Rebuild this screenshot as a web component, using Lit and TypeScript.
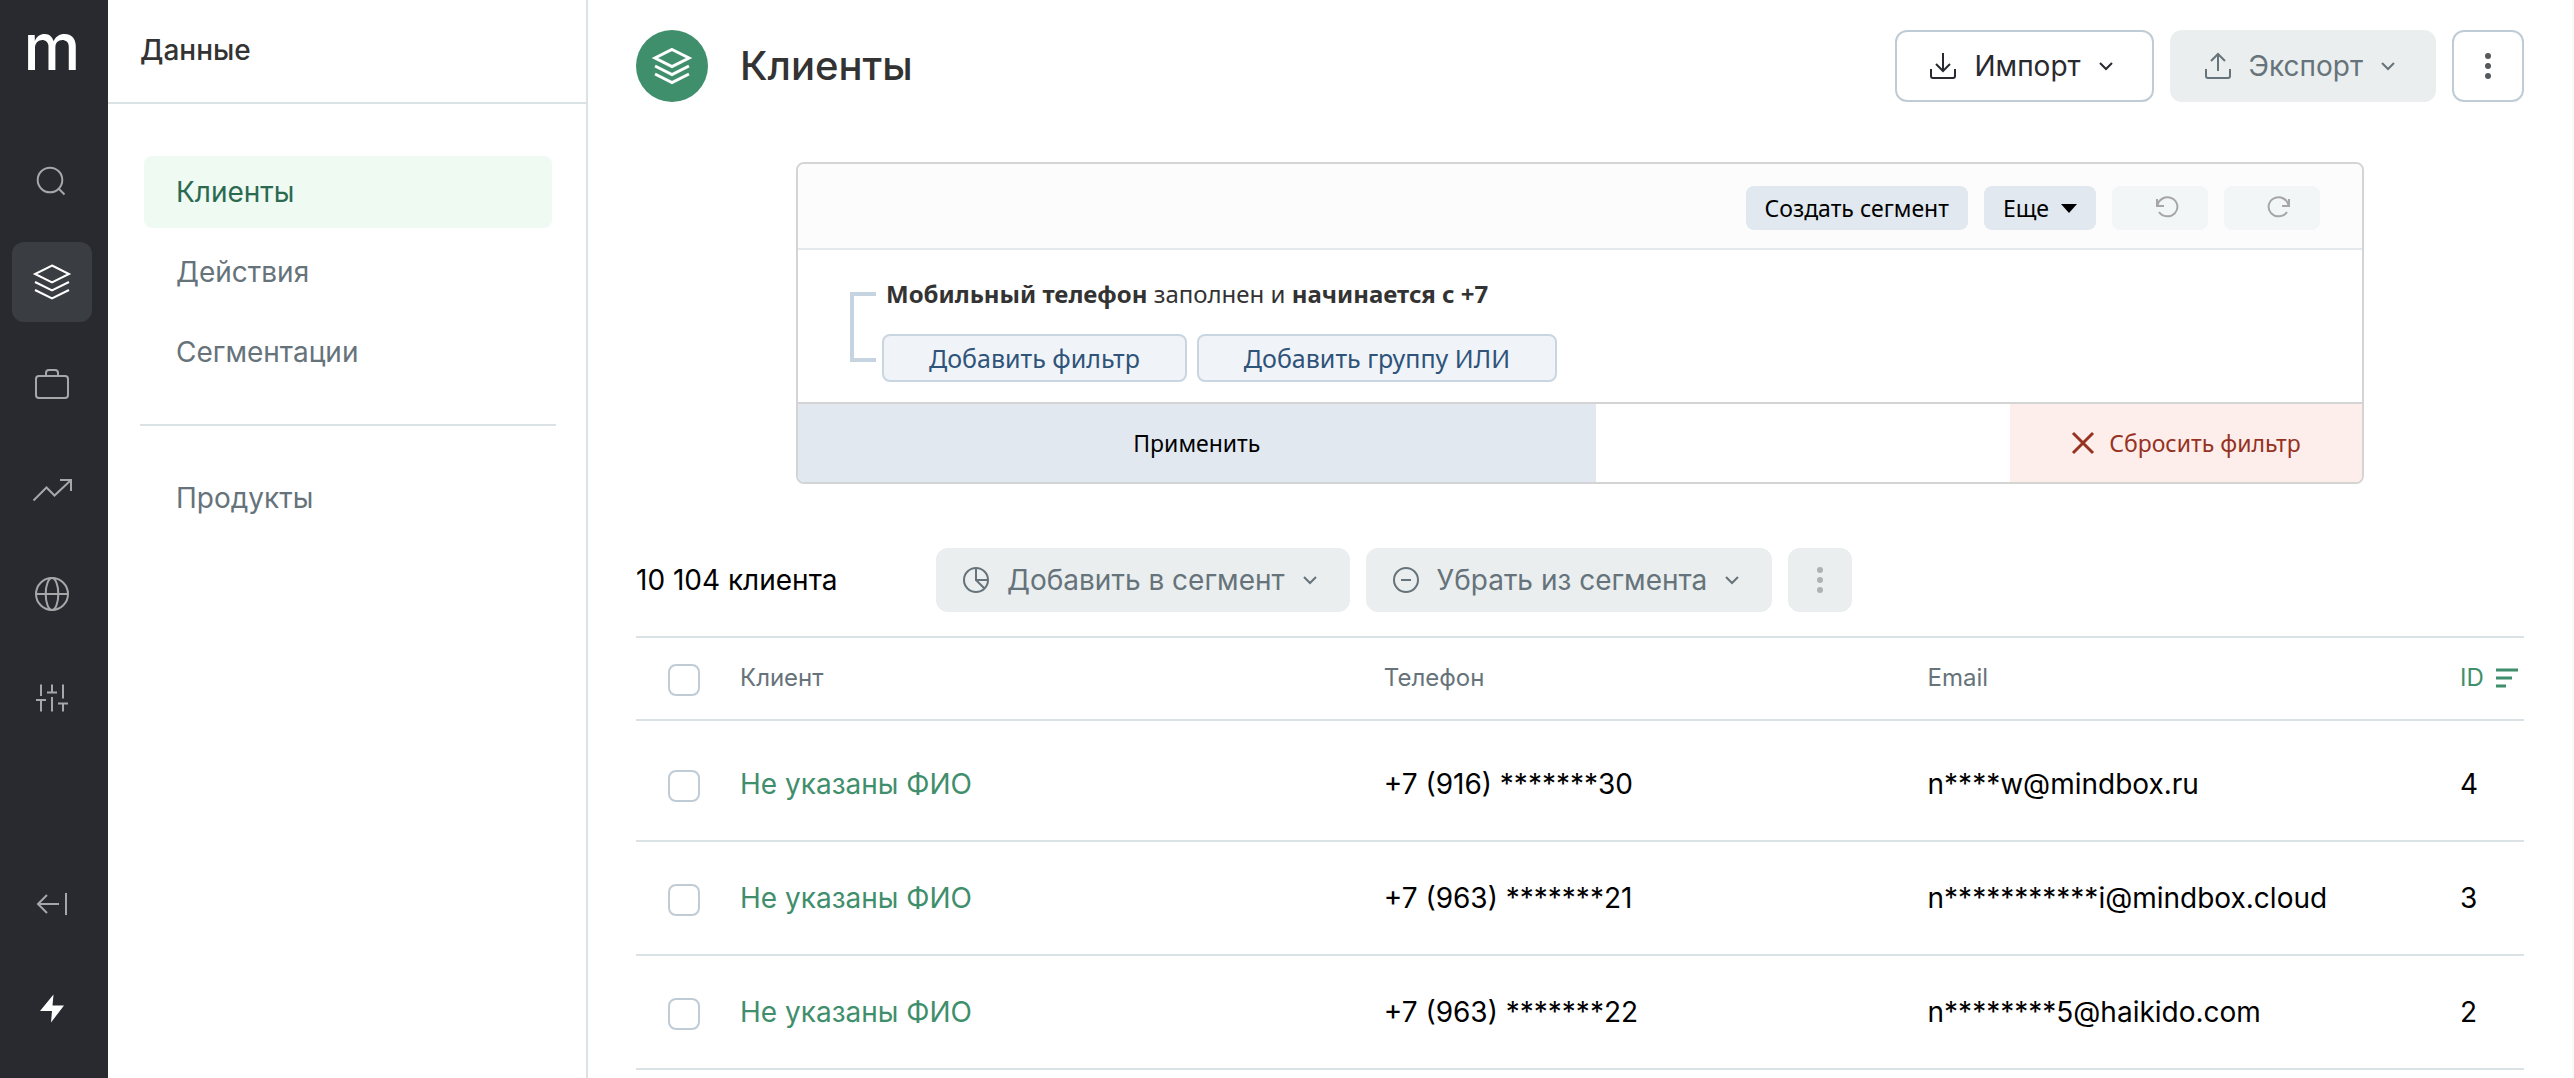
import { LitElement, html, css, svg, type TemplateResult } from "lit";
import { customElement } from "lit/decorators.js";

const LAYERS = svg`<path d="M24 7.5 41 16 24 24.5 7 16z M7 24l17 8.5L41 24 M7 32l17 8.5L41 32" />`;

const RAIL: Record<string, TemplateResult> = {
  search: svg`<circle cx="22" cy="26" r="12.3" /><path d="m31 35 5.5 5.5" />`,
  layers: LAYERS,
  briefcase: svg`<rect x="8" y="14" width="32" height="22" rx="3" /><path d="M18 14v-3a3 3 0 0 1 3-3h6a3 3 0 0 1 3 3v3" />`,
  trend: svg`<path d="M5.500 34.500 18.500 21.500 26.500 29.500 43 14 M32 14h11v11" />`,
  globe: svg`<circle cx="24" cy="24" r="16" /><ellipse cx="24" cy="24" rx="6.3" ry="16" /><path d="M8 24h32" />`,
  sliders: svg`<path d="M13 10.500V22 M13 26v11.500 M8 26h10 M24 10.500v8 M19 18.500h10 M24 23v14.500 M35 10.500v14 M35 29.500v8 M30 29.500h10" />`,
  collapse: svg`<path d="M31 24H10 M19 15l-9 9 9 9 M38 13v22" />`,
  bolt: svg`<path class="solid" d="M25.500 10.500 12 27h12l-1 11.500L36 21.500H24.500z" />`,
};

const ICONS: Record<string, TemplateResult> = {
  import: svg`<path d="M14 1v18 M7 12l7 7 7-7 M2 17v7a2 2 0 0 0 2 2h20a2 2 0 0 0 2-2v-7" />`,
  export: svg`<path d="M14 19V2 M7 9l7-7 7 7 M2 17v7a2 2 0 0 0 2 2h20a2 2 0 0 0 2-2v-7" />`,
  pie: svg`<circle cx="14" cy="14" r="12" /><path d="M14 2v12h12 M14 14l8.500 8.500" />`,
  minus: svg`<circle cx="14" cy="14" r="12" /><path d="M9 14h10" />`,
};

const railIcon = (name: string) => html`<svg class="rail-icon" viewBox="0 0 48 48" aria-hidden="true">${RAIL[name]}</svg>`;
const icon = (name: string) => html`<svg class="icon" viewBox="0 0 28 28" aria-hidden="true">${ICONS[name]}</svg>`;
const chevron = html`<svg class="chevron" viewBox="0 0 16 16" aria-hidden="true"><path d="M2 5l6 6 6-6" /></svg>`;
const dots = html`<svg class="dots" viewBox="0 0 8 28" aria-hidden="true"><circle cx="4" cy="4" r="3" /><circle cx="4" cy="14" r="3" /><circle cx="4" cy="24" r="3" /></svg>`;

interface Client {
  name: string;
  phone: string;
  email: string;
  id: number;
}

const CLIENTS: Client[] = [
  { name: "Не указаны ФИО", phone: "+7 (916) *******30", email: "n****w@mindbox.ru", id: 4 },
  { name: "Не указаны ФИО", phone: "+7 (963) *******21", email: "n***********i@mindbox.cloud", id: 3 },
  { name: "Не указаны ФИО", phone: "+7 (963) *******22", email: "n********5@haikido.com", id: 2 },
];

const RAIL_LINKS = [
  { name: "search", label: "Поиск" },
  { name: "layers", label: "Данные" },
  { name: "briefcase", label: "Кампании" },
  { name: "trend", label: "Отчеты" },
  { name: "globe", label: "Интеграции" },
  { name: "sliders", label: "Настройки" },
];

@customElement("app-root")
export class AppRoot extends LitElement {
  static styles = css`
    :host {
      display: flex;
      min-height: 100vh;
      background: #fff;
      color: #000;
      font-family: Inter, "Noto Sans", sans-serif;
      font-size: 28px;
      line-height: 36px;
    }
    * { box-sizing: border-box; }
    button {
      font: inherit;
      color: inherit;
      margin: 0;
      padding: 0;
      border: 0;
      background: none;
      white-space: nowrap;
    }
    a { color: inherit; text-decoration: none; }
    svg {
      display: block;
      flex: none;
      fill: none;
      stroke: currentColor;
      stroke-width: 2;
    }

    .rail {
      flex: none;
      display: flex;
      flex-direction: column;
      gap: 24px;
      width: 108px;
      padding: 14px 16px 30px 12px;
      background: #292a2f;
      color: #a6a7a9;
    }
    .logo {
      height: 76px;
      margin-bottom: 24px;
      color: #fff;
      font-size: 64px;
      font-weight: 500;
      line-height: 66px;
      text-align: center;
    }
    .rail-button {
      display: grid;
      place-items: center;
      width: 80px;
      height: 80px;
      border-radius: 12px;
    }
    .rail-button.active { background: #3a3d42; color: #fff; }
    .rail-button.bright { color: #fff; }
    .rail-icon { width: 48px; height: 48px; }
    .solid { fill: currentColor; stroke: none; }
    .push { margin-top: auto; }

    .sidebar {
      flex: none;
      width: 480px;
      border-right: 2px solid #dbe2e6;
    }
    .sidebar-title {
      margin: 0;
      padding: 32px 32px 34px;
      border-bottom: 2px solid #dbe2e6;
      color: #333;
      font-size: 28px;
      font-weight: 500;
    }
    .menu {
      display: flex;
      flex-direction: column;
      gap: 8px;
      padding: 52px 30px 0 32px;
      color: #66737a;
    }
    .menu-link {
      margin: 0 4px;
      padding: 18px 32px;
      border-radius: 8px;
    }
    .menu-link.active { background: #eefaf2; color: #2b6a50; }
    .menu-line {
      width: 100%;
      margin: 28px 0;
      border: 0;
      border-top: 2px solid #dbe2e6;
    }

    .main {
      flex: 1;
      min-width: 0;
      padding: 30px 48px 0;
      border-right: 2px solid #f9fafa;
    }
    .header { display: flex; align-items: center; gap: 16px; }
    .badge {
      display: grid;
      place-items: center;
      width: 72px;
      height: 72px;
      margin-right: 16px;
      border-radius: 50%;
      background: #3f8e6c;
      color: #fff;
    }
    .badge svg { width: 48px; height: 48px; stroke-width: 3; }
    .title {
      flex: 1;
      margin: 0;
      color: #333;
      font-size: 40px;
      font-weight: 500;
      line-height: 48px;
    }
    .icon { width: 28px; height: 28px; }
    .chevron { width: 16px; height: 16px; }
    .dots { width: 8px; height: 28px; fill: currentColor; stroke: none; }

    .action {
      display: flex;
      align-items: center;
      gap: 17px;
      height: 72px;
      padding: 0 38px 0 32px;
      border: 2px solid #c0ccd5;
      border-radius: 12px;
      color: #292a2f;
    }
    .action.off { border-color: #eaeeef; background: #eaeeef; color: #66737a; }
    .action.square { justify-content: center; width: 72px; padding: 0; color: #56595c; }
    .action.small { height: 64px; padding: 0 30px 0 24px; }
    .action.small.square { width: 64px; padding: 0; color: #aeb2b4; }

    .filter {
      margin: 60px 160px 0;
      border: 2px solid #d4d4d4;
      border-radius: 8px;
      overflow: hidden;
      font-family: "Noto Sans", "Open Sans", sans-serif;
    }
    .filter-top {
      display: flex;
      justify-content: flex-end;
      gap: 16px;
      padding: 22px 42px 18px;
      border-bottom: 2px solid #e2e8ec;
      background: #fcfcfc;
      font-size: 23px;
    }
    .tool {
      display: flex;
      align-items: center;
      gap: 12px;
      height: 44px;
      padding: 0 19px;
      border-radius: 8px;
      background: #e1e8ef;
      color: #000;
    }
    .tool.off { width: 96px; padding: 0 0 0 42px; background: #f2f6f7; color: #a6a6a6; }
    .tool-icon { width: 26px; height: 24px; }
    .caret { width: 16px; height: 10px; fill: currentColor; stroke: none; }

    .filter-body {
      display: flex;
      gap: 6px;
      padding: 28px 52px 20px;
    }
    .bracket {
      flex: none;
      width: 26px;
      height: 70px;
      margin-top: 14px;
      border: 4px solid #c6d3e1;
      border-right: 0;
    }
    .condition {
      margin: 0 0 24px;
      padding-left: 4px;
      color: #333;
      font-size: 24px;
      line-height: 32px;
    }
    .adders { display: flex; gap: 10px; }
    .add {
      height: 48px;
      padding: 0 45px;
      border: 2px solid #c9d6e1;
      border-radius: 8px;
      background: #f0f4f8;
      color: #2f5379;
      font-size: 25px;
    }
    .filter-foot {
      display: grid;
      grid-template-columns: 51% 352px;
      justify-content: space-between;
      height: 80px;
      border-top: 2px solid #d4d4d4;
      font-size: 23px;
    }
    .apply { background: #e1e8ef; color: #000; }
    .reset {
      display: flex;
      align-items: center;
      justify-content: center;
      gap: 14px;
      background: #fdeeeb;
      color: #96321f;
    }
    .cross { width: 24px; height: 24px; stroke-width: 3; }

    .bulk {
      display: flex;
      align-items: center;
      gap: 16px;
      margin: 64px 0 24px;
    }
    .count { width: 284px; }

    .clients {
      width: 100%;
      table-layout: fixed;
      border-spacing: 0;
      border-top: 2px solid #dbe2e6;
    }
    .clients th, .clients td {
      padding: 0;
      border-bottom: 2px solid #dbe2e6;
      text-align: left;
      white-space: nowrap;
    }
    .clients th {
      height: 83px;
      padding-bottom: 2px;
      color: #66737a;
      font-size: 24px;
      font-weight: 400;
    }
    .clients td { height: 114px; }
    .clients tbody tr:first-child td { height: 121px; padding-top: 7px; }
    .col-check { width: 104px; }
    .col-name { width: 34.1%; }
    .col-phone { width: 28.8%; }
    .col-email { width: 28.2%; }
    .check {
      appearance: none;
      display: block;
      width: 32px;
      height: 32px;
      margin: 4px 0 0 32px;
      border: 2px solid #c0ccd5;
      border-radius: 8px;
      background: #fff;
    }
    .name { color: #3f8e6c; }
    .sort { display: flex; align-items: center; gap: 12px; color: #3f8e6c; }
    .sort-icon { width: 22px; height: 22px; stroke-width: 3; }
  `;

  render() {
    return html`
      <nav class="rail" aria-label="Разделы">
        <div class="logo">m</div>
        ${RAIL_LINKS.map(
          (l) => html`<button class="rail-button ${l.name === "layers" ? "active" : ""}" aria-label=${l.label}>${railIcon(l.name)}</button>`,
        )}
        <button class="rail-button push" aria-label="Свернуть">${railIcon("collapse")}</button>
        <button class="rail-button bright" aria-label="Быстрые действия">${railIcon("bolt")}</button>
      </nav>

      <aside class="sidebar">
        <h2 class="sidebar-title">Данные</h2>
        <nav class="menu" aria-label="Данные">
          <a class="menu-link active" href="#clients">Клиенты</a>
          <a class="menu-link" href="#actions">Действия</a>
          <a class="menu-link" href="#segments">Сегментации</a>
          <hr class="menu-line" />
          <a class="menu-link" href="#products">Продукты</a>
        </nav>
      </aside>

      <main class="main">
        <header class="header">
          <div class="badge"><svg viewBox="0 0 48 48" aria-hidden="true">${LAYERS}</svg></div>
          <h1 class="title">Клиенты</h1>
          <button class="action">${icon("import")}<span>Импорт</span>${chevron}</button>
          <button class="action off" disabled>${icon("export")}<span>Экспорт</span>${chevron}</button>
          <button class="action square" aria-label="Еще действия">${dots}</button>
        </header>

        <section class="filter" aria-label="Фильтр">
          <div class="filter-top">
            <button class="tool">Создать сегмент</button>
            <button class="tool">Еще<svg class="caret" viewBox="0 0 16 10" aria-hidden="true"><path d="M0 1h16L8 10z" /></svg></button>
            <button class="tool off" disabled aria-label="Отменить">
              <svg class="tool-icon" viewBox="0 0 26 24" aria-hidden="true"><path d="M3 3v7h7 M3.500 9.500A10 9.500 0 1 1 5 16" /></svg>
            </button>
            <button class="tool off" disabled aria-label="Повторить">
              <svg class="tool-icon" viewBox="0 0 26 24" aria-hidden="true"><path d="M23 3v7h-7 M22.500 9.500A10 9.500 0 1 0 21 16" /></svg>
            </button>
          </div>
          <div class="filter-body">
            <div class="bracket"></div>
            <div>
              <p class="condition"><b>Мобильный телефон</b> заполнен и <b>начинается с +7</b></p>
              <div class="adders">
                <button class="add">Добавить фильтр</button>
                <button class="add">Добавить группу ИЛИ</button>
              </div>
            </div>
          </div>
          <div class="filter-foot">
            <button class="apply">Применить</button>
            <button class="reset">
              <svg class="cross" viewBox="0 0 24 24" aria-hidden="true"><path d="M2 2l20 20 M22 2 2 22" /></svg>Сбросить фильтр
            </button>
          </div>
        </section>

        <div class="bulk">
          <div class="count">10 104 клиента</div>
          <button class="action off small" disabled>${icon("pie")}<span>Добавить в сегмент</span>${chevron}</button>
          <button class="action off small" disabled>${icon("minus")}<span>Убрать из сегмента</span>${chevron}</button>
          <button class="action off small square" disabled aria-label="Еще">${dots}</button>
        </div>

        <table class="clients">
          <thead>
            <tr>
              <th class="col-check"><input class="check" type="checkbox" aria-label="Выбрать всех" /></th>
              <th class="col-name">Клиент</th>
              <th class="col-phone">Телефон</th>
              <th class="col-email">Email</th>
              <th>
                <button class="sort">ID<svg class="sort-icon" viewBox="0 0 22 22" aria-hidden="true"><path d="M0 3h22 M0 11h16 M0 19h10" /></svg></button>
              </th>
            </tr>
          </thead>
          <tbody>
            ${CLIENTS.map(
              (c) => html`<tr>
                <td><input class="check" type="checkbox" aria-label="Выбрать клиента ${c.id}" /></td>
                <td><a class="name" href="#client-${c.id}">${c.name}</a></td>
                <td>${c.phone}</td>
                <td>${c.email}</td>
                <td>${c.id}</td>
              </tr>`,
            )}
          </tbody>
        </table>
      </main>
    `;
  }
}
